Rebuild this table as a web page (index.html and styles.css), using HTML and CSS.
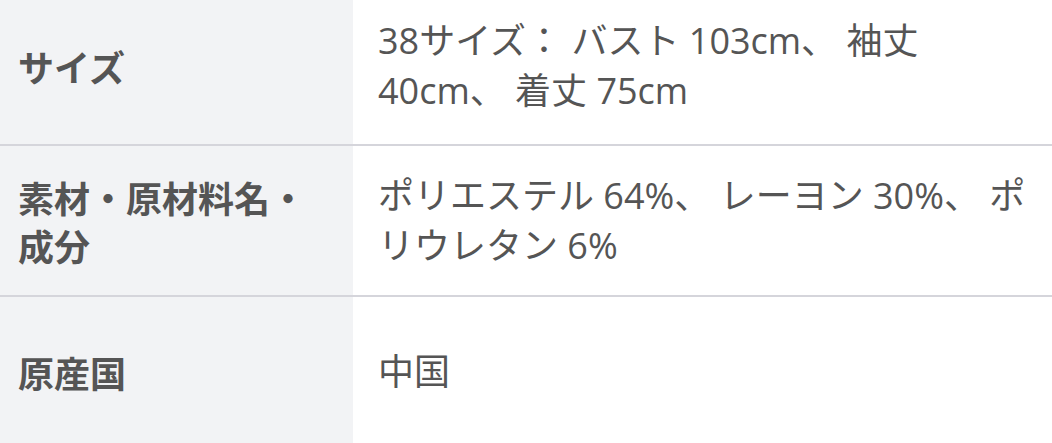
FILE: index.html
```html
<!DOCTYPE html>
<html lang="ja">
<head>
<meta charset="utf-8">
<link rel="stylesheet" href="styles.css">
</head>
<body>
<table class="spec">
  <tr class="row row-size">
    <th class="label">サイズ</th>
    <td class="value">38サイズ： バスト 103cm、 袖丈 40cm、 着丈 75cm</td>
  </tr>
  <tr class="row row-material">
    <th class="label">素材・原材料名・成分</th>
    <td class="value">ポリエステル 64%、 レーヨン 30%、 ポリウレタン 6%</td>
  </tr>
  <tr class="row row-origin">
    <th class="label">原産国</th>
    <td class="value">中国</td>
  </tr>
</table>
</body>
</html>
```

FILE: styles.css
```css
html, body {
  margin: 0;
  padding: 0;
  background: #ffffff;
}
.spec {
  width: 1052px;
  border-collapse: collapse;
  table-layout: fixed;
  font-family: "Open Sans", "Noto Sans CJK JP", sans-serif;
  font-size: 36px;
  color: #555555;
}
.row {
  border-bottom: 2px solid #d5d5db;
}
.label {
  width: 353px;
  box-sizing: border-box;
  background: #f2f3f5;
  text-align: left;
  font-weight: 700;
  line-height: 48px;
  padding: 0 20px 0 18px;
  vertical-align: middle;
  font-family: "Noto Sans CJK JP", sans-serif;
}
.value {
  padding: 0 12px 0 25px;
  line-height: 50px;
  vertical-align: middle;
}
.row-size {
  height: 145px;
}
.row-size .label,
.row-size .value {
  padding-bottom: 12px;
}
.row-material {
  height: 151px;
}
.row-origin {
  height: 152px;
}
```
